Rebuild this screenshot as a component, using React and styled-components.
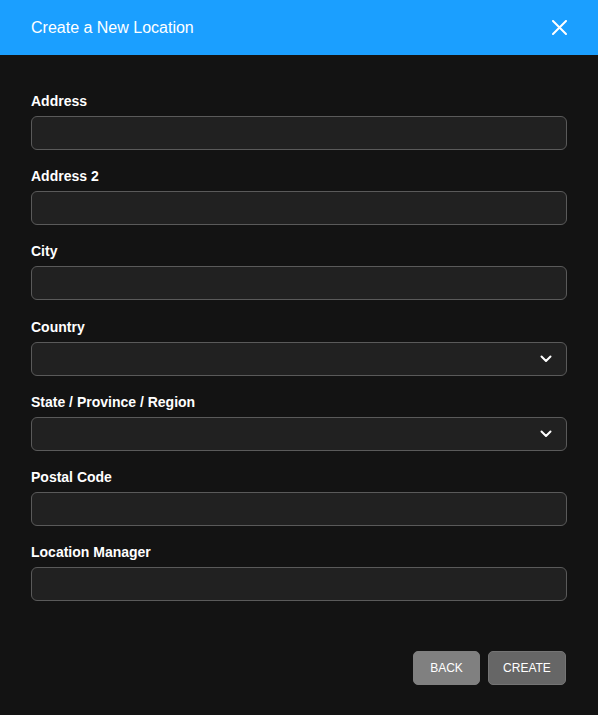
import React from "react";
import styled, { createGlobalStyle } from "styled-components";

const Global = createGlobalStyle`
  html, body { margin: 0; padding: 0; background: #131313; }
  body { font-family: "Liberation Sans", Arial, Helvetica, sans-serif; }
  * { box-sizing: border-box; }
`;

const Dialog = styled.div`
  width: 598px;
  height: 715px;
  background: #131313;
  display: flex;
  flex-direction: column;
`;

const Header = styled.div`
  height: 55px;
  background: #1b9fff;
  display: flex;
  align-items: center;
  justify-content: space-between;
  padding: 0 31px;
`;

const Title = styled.h2`
  margin: 0;
  font-size: 16px;
  font-weight: 400;
  color: #ffffff;
`;

const CloseButton = styled.button`
  background: none;
  border: none;
  padding: 0;
  width: 16px;
  height: 16px;
  display: flex;
  align-items: center;
  justify-content: center;
  cursor: pointer;
`;

const Body = styled.div`
  flex: 1;
  padding: 38px 31px 0;
  display: flex;
  flex-direction: column;
  gap: 18.2px;
`;

const Field = styled.div`
  display: flex;
  flex-direction: column;
  gap: 7px;
`;

const Label = styled.label`
  font-size: 14px;
  font-weight: 700;
  color: #ffffff;
  line-height: 16px;
`;

const InputBox = styled.div`
  position: relative;
  height: 34px;
  border: 1px solid #5a5a5a;
  border-radius: 6px;
  background: #212121;
`;

const Input = styled.input`
  width: 100%;
  height: 100%;
  background: transparent;
  border: none;
  outline: none;
  color: #fff;
  font-family: inherit;
  font-size: 13px;
  padding: 0 10px;
`;

const Chevron = styled.svg`
  position: absolute;
  right: 14px;
  top: 50%;
  transform: translateY(-50%);
`;

const Footer = styled.div`
  display: flex;
  justify-content: flex-end;
  gap: 8px;
  padding: 0 32px 30px;
`;

const Button = styled.button`
  height: 34px;
  width: ${(p) => p.$w}px;
  padding: 0;
  border-radius: 5px;
  border: 1px solid ${(p) => p.$border};
  background: ${(p) => p.$bg};
  color: #ffffff;
  font-family: inherit;
  font-size: 12px;
  cursor: pointer;
`;

const fields = [
  { label: "Address" },
  { label: "Address 2" },
  { label: "City" },
  { label: "Country", select: true },
  { label: "State / Province / Region", select: true },
  { label: "Postal Code" },
  { label: "Location Manager" },
];

export default function App() {
  return (
    <>
      <Global />
      <Dialog>
        <Header>
          <Title>Create a New Location</Title>
          <CloseButton aria-label="close">
            <svg width="15" height="15" viewBox="0 0 15 15">
              <path d="M1 1 L14 14 M14 1 L1 14" stroke="#fff" strokeWidth="2" strokeLinecap="round" />
            </svg>
          </CloseButton>
        </Header>
        <Body>
          {fields.map((f) => (
            <Field key={f.label}>
              <Label>{f.label}</Label>
              <InputBox>
                <Input />
                {f.select && (
                  <Chevron width="12" height="8" viewBox="0 0 12 8">
                    <path d="M1.5 1.5 L6 6 L10.5 1.5" stroke="#fff" strokeWidth="2" fill="none" strokeLinecap="round" strokeLinejoin="round" />
                  </Chevron>
                )}
              </InputBox>
            </Field>
          ))}
        </Body>
        <Footer>
          <Button $bg="#808080" $border="#808080" $w={67}>BACK</Button>
          <Button $bg="#666666" $border="#747474" $w={78}>CREATE</Button>
        </Footer>
      </Dialog>
    </>
  );
}
